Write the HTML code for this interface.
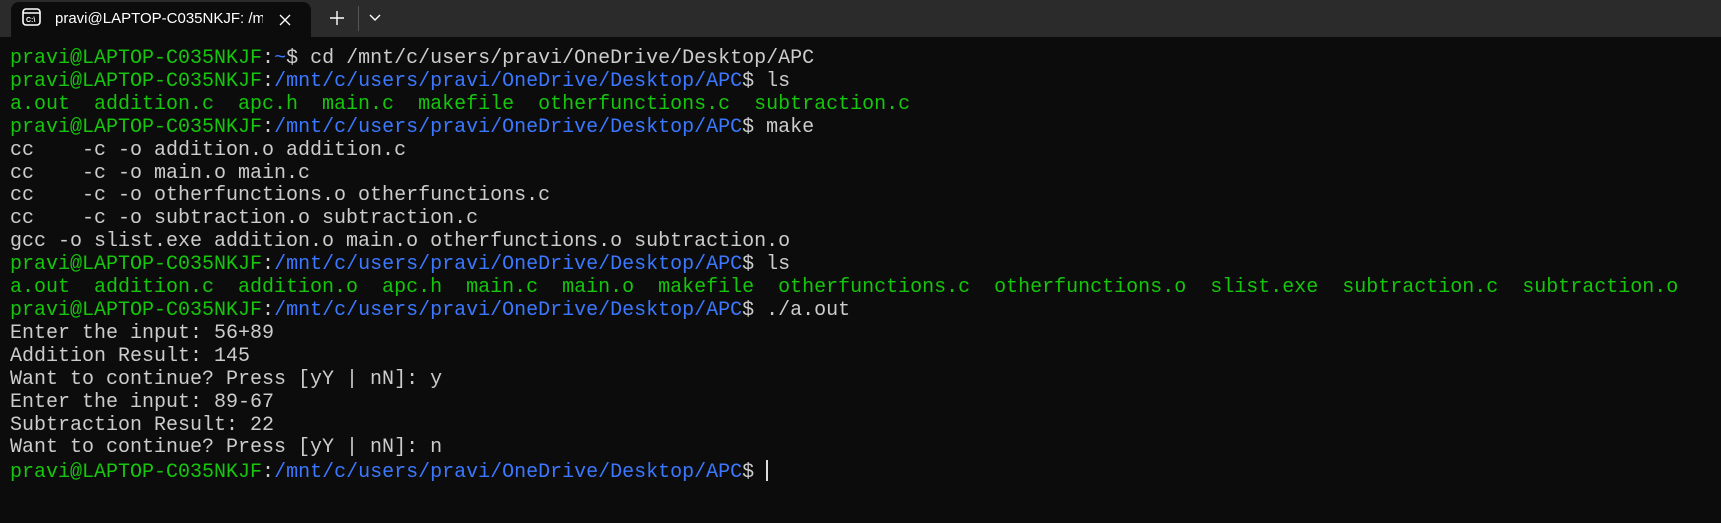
<!DOCTYPE html>
<html><head><meta charset="utf-8"><style>
html,body{margin:0;padding:0;width:1721px;height:523px;overflow:hidden;background:#0c0c0c}
.bar{position:absolute;left:0;top:0;width:1721px;height:37px;background:#2b2b2b}
.tab{position:absolute;left:11px;top:2px;width:300px;height:35px;background:#0c0c0c;border-radius:8px 8px 0 0}
.title{position:absolute;top:8px;width:208px;overflow:hidden;white-space:nowrap;color:#fff;font:15px "Liberation Sans",sans-serif}
.term{position:absolute;left:10px;top:48px;font:20px/22.9px "Liberation Mono",monospace;color:#cccccc;white-space:pre;margin:0}
.g{color:#16c60c}.b{color:#3b78ff}
.cur{display:inline-block;width:2px;height:21px;background:#ddd;vertical-align:-4px}
</style></head><body>
<div class="bar"></div>
<div class="tab">
<svg style="position:absolute;left:11px;top:6px" width="19" height="18" viewBox="0 0 19 18"><rect x="1" y="1" width="17" height="16" rx="3" fill="none" stroke="#fff" stroke-width="1.6"/><line x1="1" y1="5" x2="18" y2="5" stroke="#fff" stroke-width="1.4"/><text x="4" y="14" font-family="Liberation Sans" font-size="7" fill="#fff" font-weight="bold">C:\</text></svg>
<div class="title" style="left:44px">pravi@LAPTOP-C035NKJF: /mnt/c/users</div>
<svg style="position:absolute;left:268px;top:12px" width="12" height="12"><path d="M1 1L11 11M11 1L1 11" stroke="#fff" stroke-width="1.3"/></svg>
</div>
<svg style="position:absolute;left:330px;top:11px" width="14" height="14"><path d="M7 0V14M0 7H14" stroke="#fff" stroke-width="1.4"/></svg>
<div style="position:absolute;left:358px;top:6px;width:1px;height:25px;background:#555"></div>
<svg style="position:absolute;left:369px;top:14px" width="12" height="8"><path d="M1 1L6 6L11 1" stroke="#fff" stroke-width="1.4" fill="none"/></svg>
<pre class="term"><span class="g">pravi@LAPTOP-C035NKJF</span>:<span class="b">~</span>$ cd /mnt/c/users/pravi/OneDrive/Desktop/APC
<span class="g">pravi@LAPTOP-C035NKJF</span>:<span class="b">/mnt/c/users/pravi/OneDrive/Desktop/APC</span>$ ls
<span class="g">a.out  addition.c  apc.h  main.c  makefile  otherfunctions.c  subtraction.c</span>
<span class="g">pravi@LAPTOP-C035NKJF</span>:<span class="b">/mnt/c/users/pravi/OneDrive/Desktop/APC</span>$ make
cc    -c -o addition.o addition.c
cc    -c -o main.o main.c
cc    -c -o otherfunctions.o otherfunctions.c
cc    -c -o subtraction.o subtraction.c
gcc -o slist.exe addition.o main.o otherfunctions.o subtraction.o
<span class="g">pravi@LAPTOP-C035NKJF</span>:<span class="b">/mnt/c/users/pravi/OneDrive/Desktop/APC</span>$ ls
<span class="g">a.out  addition.c  addition.o  apc.h  main.c  main.o  makefile  otherfunctions.c  otherfunctions.o  slist.exe  subtraction.c  subtraction.o</span>
<span class="g">pravi@LAPTOP-C035NKJF</span>:<span class="b">/mnt/c/users/pravi/OneDrive/Desktop/APC</span>$ ./a.out
Enter the input: 56+89
Addition Result: 145
Want to continue? Press [yY | nN]: y
Enter the input: 89-67
Subtraction Result: 22
Want to continue? Press [yY | nN]: n
<span class="g">pravi@LAPTOP-C035NKJF</span>:<span class="b">/mnt/c/users/pravi/OneDrive/Desktop/APC</span>$ <span class="cur"></span></pre>
</body></html>
